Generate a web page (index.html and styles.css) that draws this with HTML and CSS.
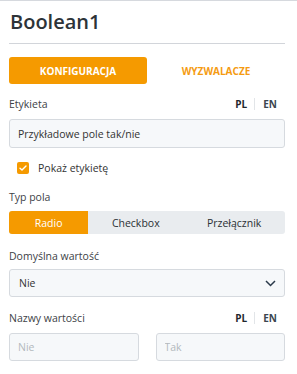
FILE: index.html
```html
<!doctype html>
<html lang="pl">
<head>
  <meta charset="UTF-8">
  <title>Boolean1</title>
  <link rel="stylesheet" href="styles.css">
</head>
<body>
  <div class="panel">
    <h1 class="title">Boolean1</h1>

    <div class="tabs">
      <button type="button" class="tab active">KONFIGURACJA</button>
      <button type="button" class="tab">WYZWALACZE</button>
    </div>

    <div class="field-head first">
      <span class="label">Etykieta</span>
      <span class="langs"><b class="lang on">PL</b><i class="sep"></i><b class="lang">EN</b></span>
    </div>
    <input class="text-input" type="text" value="Przykładowe pole tak/nie">

    <label class="check">
      <span class="box">
        <svg width="8" height="6" viewBox="0 0 8 6"><path d="M1 3.2 L3 5 L7 1" fill="none" stroke="#fff" stroke-width="1.4" stroke-linecap="round" stroke-linejoin="round"/></svg>
      </span>
      Pokaż etykietę
    </label>

    <div class="field-head type">
      <span class="label">Typ pola</span>
    </div>
    <div class="segments">
      <span class="seg active">Radio</span>
      <span class="seg">Checkbox</span>
      <span class="seg">Przełącznik</span>
    </div>

    <div class="field-head default">
      <span class="label">Domyślna wartość</span>
    </div>
    <div class="select">
      <span>Nie</span>
      <svg width="11" height="7" viewBox="0 0 11 7"><path d="M1 1 L5.5 5.5 L10 1" fill="none" stroke="#2b3a4a" stroke-width="1.5"/></svg>
    </div>

    <div class="field-head names">
      <span class="label">Nazwy wartości</span>
      <span class="langs"><b class="lang on">PL</b><i class="sep"></i><b class="lang">EN</b></span>
    </div>
    <div class="pair">
      <input class="text-input small" type="text" placeholder="Nie">
      <input class="text-input small" type="text" placeholder="Tak">
    </div>
  </div>
</body>
</html>
```

FILE: styles.css
```css
body {
  margin: 0;
  font-family: 'Open Sans', sans-serif;
  color: #333;
  background: #fff;
  border-top: 1px solid #d6d9de;
}
.panel {
  padding: 0 12px 0 9px;
}
.title {
  margin: 0;
  padding-left: 1px;
  height: 42px;
  line-height: 42px;
  font-size: 20px;
  font-weight: 600;
  color: #2d3338;
  border-bottom: 1px solid #d2d5da;
}
.tabs {
  display: flex;
  margin-top: 13px;
}
.tab {
  flex: 1;
  height: 27px;
  border: none;
  border-radius: 3px;
  background: none;
  font-family: inherit;
  font-size: 10px;
  font-weight: 700;
  color: #f59b12;
  padding: 0;
}
.tab.active {
  background: #f59a00;
  color: #fff;
}
.field-head {
  display: flex;
  justify-content: space-between;
  align-items: center;
  height: 16px;
  font-size: 10.5px;
  color: #3d4247;
}
.field-head.first { margin-top: 12px; }
.field-head.type { margin-top: 13px; }
.field-head.default { margin-top: 14px; }
.field-head.names { margin-top: 13px; }
.langs {
  display: flex;
  align-items: center;
  padding-right: 8px;
}
.lang {
  font-size: 10px;
  font-weight: 700;
  color: #3b4550;
}
.lang.on {
  color: #1f262d;
}
.sep {
  width: 1px;
  height: 12px;
  background: #e2e5e8;
  margin: 0 8px 0 7px;
}
.text-input {
  display: block;
  box-sizing: border-box;
  width: 100%;
  height: 29px;
  margin-top: 7px;
  padding: 0 8px;
  border: 1px solid #d6dadf;
  border-radius: 3px;
  background: #f6f8fa;
  font-family: inherit;
  font-size: 10.5px;
  color: #333;
}
.text-input::placeholder {
  color: #b3b8bd;
}
.check {
  display: flex;
  align-items: center;
  gap: 9px;
  margin-top: 12px;
  padding-left: 8px;
  height: 16px;
  font-size: 10.5px;
  color: #333;
}
.box {
  display: flex;
  align-items: center;
  justify-content: center;
  width: 12px;
  height: 12px;
  border-radius: 2px;
  background: #f59a00;
}
.segments {
  display: flex;
  margin-top: 6px;
  height: 23px;
  border-radius: 3px;
  background: #e9ecef;
  overflow: hidden;
}
.seg {
  flex: 1 1 auto;
  display: flex;
  align-items: center;
  justify-content: center;
  font-size: 10.5px;
  color: #2b3035;
}
.seg.active {
  flex-basis: 32px;
  background: #f59a00;
  color: #fff;
}
.select {
  display: flex;
  justify-content: space-between;
  align-items: center;
  box-sizing: border-box;
  height: 28px;
  margin-top: 5px;
  padding: 0 8px 0 9px;
  border: 1px solid #d6dadf;
  border-radius: 3px;
  background: #f6f8fa;
  font-size: 10.5px;
  color: #333;
}
.pair {
  display: flex;
  gap: 17px;
}
.text-input.small {
  flex: 1;
  min-width: 0;
  height: 28px;
}
```
